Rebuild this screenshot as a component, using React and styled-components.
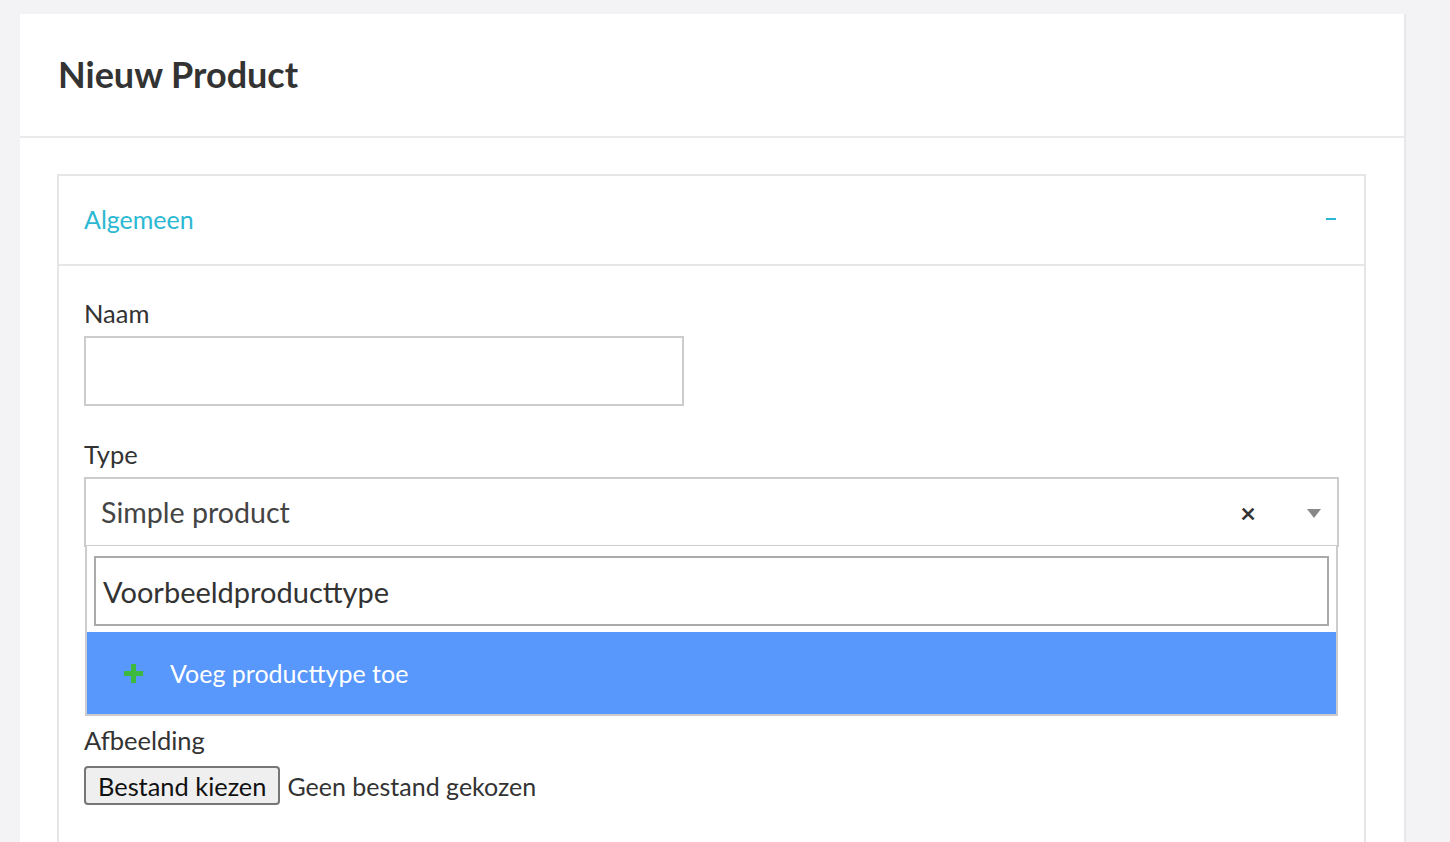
import styled, { createGlobalStyle } from "styled-components";

const GlobalStyle = createGlobalStyle`
  body {
    margin: 0;
    background: #f3f3f5;
    font-family: Lato, "Open Sans", sans-serif;
    color: #333;
  }
`;

const Page = styled.div`
  padding: 14px 0 0 20px;
  height: 828px;
  overflow: hidden;
`;

const Card = styled.div`
  width: 1384px;
  background: #fff;
  border-right: 2px solid #e8e8ea;
  min-height: 828px;
`;

const CardHeader = styled.div`
  height: 120px;
  display: flex;
  align-items: center;
  padding: 0 38px 2px;
  border-bottom: 2px solid #eaeaea;
`;

const Title = styled.h1`
  margin: 0;
  font-size: 36px;
  font-weight: 700;
  color: #333;
`;

const CardBody = styled.div`
  padding: 36px 38px 0 37px;
`;

const Panel = styled.section`
  border: 2px solid #e6e6e6;
  border-bottom: none;
`;

const PanelHeader = styled.div`
  height: 90px;
  display: flex;
  align-items: center;
  justify-content: space-between;
  padding: 0 28px 2px 25px;
  box-sizing: border-box;
  border-bottom: 2px solid #e6e6e6;
`;

const PanelTitle = styled.h2`
  margin: 0;
  font-size: 25px;
  font-weight: 400;
  color: #2bb8d2;
`;

const Collapse = styled.span`
  display: block;
  width: 10px;
  height: 2px;
  background: #2bb8d2;
`;

const PanelBody = styled.div`
  padding: 31px 25px 40px;
`;

// the open dropdown covers the next field, so the Type field keeps room below it
const Field = styled.div`
  margin-bottom: ${(p) => p.$gap ?? 32}px;
`;

const Label = styled.label`
  display: block;
  font-size: 25.5px;
  line-height: 33px;
  margin-bottom: ${(p) => p.$gap ?? 6}px;
  color: #333;
`;

const TextInput = styled.input`
  display: block;
  box-sizing: border-box;
  width: 600px;
  height: 70px;
  border: 2px solid #ccc;
  outline: none;
  font-family: inherit;
  font-size: 25px;
`;

const SelectWrap = styled.div`
  position: relative;
`;

const SelectBox = styled.div`
  box-sizing: border-box;
  height: 70px;
  border: 2px solid #ccc;
  display: flex;
  align-items: center;
  padding: 0 16px 0 15px;
  font-size: 28.6px;
  color: #444;
`;

const SelectValue = styled.span`
  flex: 1;
`;

const Clear = styled.span`
  font-size: 27px;
  font-weight: 700;
  color: #333;
  margin-right: 51px;
  line-height: 1;
`;

const Arrow = styled.span`
  width: 0;
  height: 0;
  border-left: 7px solid transparent;
  border-right: 7px solid transparent;
  border-top: 9px solid #888;
  margin-top: 2px;
`;

const Dropdown = styled.div`
  position: absolute;
  left: 1px;
  right: 1px;
  top: 69px;
  background: #fff;
  border: 2px solid #ccc;
  border-top: none;
  z-index: 5;
`;

const SearchRow = styled.div`
  padding: 10px 7px 6px;
`;

const Search = styled.div`
  box-sizing: border-box;
  height: 70px;
  border: 2px solid #aaa;
  display: flex;
  align-items: center;
  padding: 0 7px;
  font-size: 29px;
  color: #333;
`;

const Option = styled.div`
  height: 82px;
  background: #5897fb;
  display: flex;
  align-items: center;
  padding-left: 37px;
  gap: 27px;
  color: #fff;
  font-size: 25px;
`;

const Plus = styled.span`
  position: relative;
  width: 19px;
  height: 19px;

  &::before,
  &::after {
    content: "";
    position: absolute;
    background: #3dba3d;
  }
  &::before {
    left: 7px;
    top: 0;
    width: 5px;
    height: 19px;
  }
  &::after {
    top: 7px;
    left: 0;
    width: 19px;
    height: 5px;
  }
`;

const FileRow = styled.div`
  display: flex;
  align-items: center;
  gap: 7px;
  font-size: 25px;
`;

const FileButton = styled.button`
  box-sizing: border-box;
  height: 39px;
  padding: 0 12px;
  background: #efefef;
  border: 2px solid #767676;
  border-radius: 4px;
  font-family: inherit;
  font-size: 25.4px;
  color: #111;
`;

export default function App() {
  return (
    <>
      <GlobalStyle />
      <Page>
        <Card>
          <CardHeader>
            <Title>Nieuw Product</Title>
          </CardHeader>
          <CardBody>
            <Panel>
              <PanelHeader>
                <PanelTitle>Algemeen</PanelTitle>
                <Collapse />
              </PanelHeader>
              <PanelBody>
                <Field>
                  <Label>Naam</Label>
                  <TextInput type="text" />
                </Field>
                <Field $gap={177}>
                  <Label>Type</Label>
                  <SelectWrap>
                    <SelectBox>
                      <SelectValue>Simple product</SelectValue>
                      <Clear>×</Clear>
                      <Arrow />
                    </SelectBox>
                    <Dropdown>
                      <SearchRow>
                        <Search>Voorbeeldproducttype</Search>
                      </SearchRow>
                      <Option>
                        <Plus />
                        Voeg producttype toe
                      </Option>
                    </Dropdown>
                  </SelectWrap>
                </Field>
                <Field>
                  <Label $gap={9}>Afbeelding</Label>
                  <FileRow>
                    <FileButton type="button">Bestand kiezen</FileButton>
                    <span>Geen bestand gekozen</span>
                  </FileRow>
                </Field>
              </PanelBody>
            </Panel>
          </CardBody>
        </Card>
      </Page>
    </>
  );
}
